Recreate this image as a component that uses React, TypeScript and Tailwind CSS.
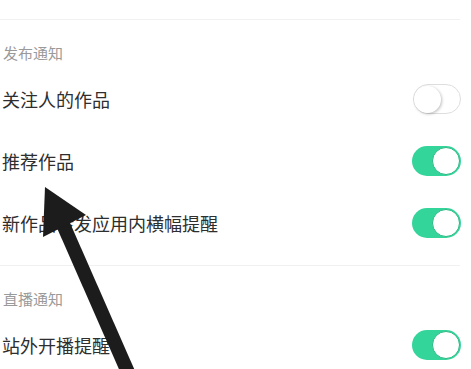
const Toggle = ({ on }: { on: boolean }) => {
  if (on) {
    return (
      <div className="flex h-[30px] w-[49px] items-center justify-end rounded-full bg-[#33d59b] p-px">
        <div className="h-[28px] w-[28px] rounded-full border border-[#2bb985] bg-white" />
      </div>
    );
  }
  return (
    <div className="flex h-[30px] w-[48px] items-center justify-start rounded-full border-[1.5px] border-[#dedede] bg-white">
      <div className="h-[27px] w-[27px] rounded-full bg-white shadow-[1px_1px_3px_rgba(0,0,0,0.25)]" />
    </div>
  );
};

interface Item {
  label: string;
  on: boolean;
}

const Section = ({ title, items }: { title: string; items: Item[] }) => (
  <div>
    <div className="h-px w-[460px] bg-[#f1f1f1]" />
    <div className="mt-[18px] flex h-[30px] items-center pl-[3px] text-[15px] text-[#9a9a9a]">
      {title}
    </div>
    {items.map((item) => (
      <div
        key={item.label}
        className="flex h-[62px] items-center justify-between pl-[2px] pr-[10px]"
      >
        <span className="text-[18px] text-[#2e2e2e]">{item.label}</span>
        <Toggle on={item.on} />
      </div>
    ))}
  </div>
);

export default function App() {
  return (
    <div
      className="relative h-[369px] w-[471px] overflow-hidden bg-white"
      style={{ fontFamily: '"Noto Sans CJK SC", "Noto Sans", sans-serif' }}
    >
      <div className="pt-[19px]">
        <Section
          title="发布通知"
          items={[
            { label: "关注人的作品", on: false },
            { label: "推荐作品", on: true },
            { label: "新作品转发应用内横幅提醒", on: true },
          ]}
        />
        <div className="mt-[11px]">
          <Section
            title="直播通知"
            items={[{ label: "站外开播提醒", on: true }]}
          />
        </div>
      </div>

      <svg
        className="pointer-events-none absolute left-0 top-0"
        width="471"
        height="369"
        viewBox="0 0 471 369"
      >
        <line x1="62" y1="222" x2="134" y2="386" stroke="#1c1c1c" strokeWidth="14" />
        <polygon points="45,187 43,237 86,215" fill="#1c1c1c" />
      </svg>
    </div>
  );
}
